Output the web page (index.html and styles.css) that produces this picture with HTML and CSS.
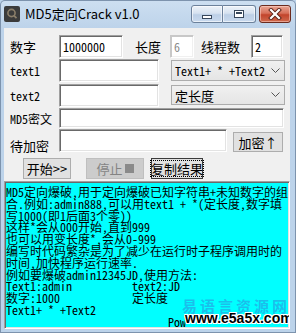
FILE: index.html
```html
<!DOCTYPE html>
<html>
<head>
<meta charset="utf-8">
<link rel="stylesheet" href="styles.css">
</head>
<body>
<div class="window">
  <div class="titlebar">
    <div class="app-icon">
      <svg width="16" height="16" viewBox="0 0 16 16">
        <rect x="0" y="0" width="16" height="16" rx="2" fill="#3b3b3b"/>
        <circle cx="7.5" cy="7" r="3.6" fill="none" stroke="#8c7f6a" stroke-width="1.6"/>
        <line x1="10" y1="9.6" x2="12.5" y2="12.2" stroke="#8c7f6a" stroke-width="1.8"/>
      </svg>
    </div>
    <div class="title">MD5定向Crack v1.0</div>
    <div class="caption-btns">
      <div class="cbtn cmin"><span class="min-glyph"></span></div>
      <div class="cbtn cmax"><span class="max-glyph"></span></div>
      <div class="cbtn cclose">
        <svg width="16" height="12" viewBox="0 0 16 12">
          <path d="M4 2 L12 10 M12 2 L4 10" stroke="#5a2218" stroke-width="4" stroke-linecap="square"/>
          <path d="M4 2 L12 10 M12 2 L4 10" stroke="#ffffff" stroke-width="2.2" stroke-linecap="square"/>
        </svg>
      </div>
    </div>
  </div>

  <div class="client">
    <div class="row r1">
      <span class="lbl lbl-first">数字</span>
      <div class="edit e-num mono">1000000</div>
      <span class="lbl lbl-len">长度</span>
      <div class="edit e-len mono disabled">6</div>
      <span class="lbl lbl-thr">线程数</span>
      <div class="edit e-thr mono">2</div>
    </div>

    <div class="row r2">
      <span class="lbl lbl-first mono">text1</span>
      <div class="edit e-text"></div>
      <div class="combo mono">Text1+ * +Text2<svg class="chev" width="9" height="6" viewBox="0 0 9 6"><path d="M0.5 0.5 L4.5 4.5 L8.5 0.5" fill="none" stroke="#555" stroke-width="1"/></svg></div>
    </div>

    <div class="row r3">
      <span class="lbl lbl-first mono">text2</span>
      <div class="edit e-text"></div>
      <div class="combo combo-cn">定长度<svg class="chev" width="9" height="6" viewBox="0 0 9 6"><path d="M0.5 0.5 L4.5 4.5 L8.5 0.5" fill="none" stroke="#555" stroke-width="1"/></svg></div>
    </div>

    <div class="row r4">
      <span class="lbl lbl-first mono">MD5密文</span>
      <div class="edit e-md5"></div>
    </div>

    <div class="row r5">
      <span class="lbl lbl-first lbl-low">待加密</span>
      <div class="edit e-plain"></div>
      <div class="btn b-enc">加密↑</div>
    </div>

    <div class="row r6">
      <div class="btn b-start">开始&gt;&gt;</div>
      <div class="btn b-stop disabled">停止<span class="sq"></span></div>
      <div class="btn b-copy"><span class="focus">复制结果</span></div>
    </div>

    <div class="memo">
<div class="memo-text">MD5定向爆破,用于定向爆破已知字符串+未知数字的组
合.例如:admin888,可以用text1 + *(定长度,数字填
写1000(即1后面3个零))
这样*会从000开始,直到999
也可以用变长度*,会从0-999
编写时代码繁杂是为了减少在运行时子程序调用时的
时间,加快程序运行速率.
例如要爆破admin12345JD,使用方法:
Text1:admin          text2:JD
数字:1000            定长度
Text1+ * +Text2
                           Pow</div>
      <div class="wm-cn">易语言资源网</div>
      <div class="wm-url">www.e5a5x.com</div>
    </div>
  </div>
</div>
</body>
</html>
```

FILE: styles.css
```css
* { box-sizing: border-box; }
html, body { margin: 0; padding: 0; }
body {
  width: 296px;
  height: 333px;
  overflow: hidden;
  background: #bcd3ea;
  font-family: "Noto Sans CJK SC", sans-serif;
  color: #000;
}
.window {
  width: 296px;
  height: 333px;
  background: linear-gradient(#cddff1 0px, #bdd3ea 28px, #bcd3ea 100%);
  box-shadow: inset 0 0 0 1px #7d93ad;
  border-radius: 5px 5px 0 0;
  display: flex;
  flex-direction: column;
}
.mono {
  font-family: "Noto Sans Mono CJK SC", "Liberation Mono", "Noto Sans CJK SC", monospace;
  font-size: 12px;
}

/* title bar */
.titlebar {
  height: 28px;
  display: flex;
  align-items: flex-start;
  padding-left: 4px;
  flex: none;
}
.app-icon { width: 16px; height: 16px; margin-top: 6px; }
.app-icon svg { display: block; }
.title {
  margin-left: 5px;
  font-size: 13px;
  line-height: 28px;
  color: #000;
  white-space: nowrap;
}
.caption-btns {
  margin-left: auto;
  margin-right: 5px;
  margin-top: 5px;
  display: flex;
}
.cbtn {
  height: 18px;
  border: 1px solid #6c819b;
  border-radius: 3px;
  display: flex;
  align-items: center;
  justify-content: center;
  background: linear-gradient(#eef3f9 0%, #d6e2f0 45%, #bccfe6 55%, #c9daee 100%);
  box-shadow: inset 0 0 0 1px rgba(255,255,255,0.6);
}
.cmin { width: 32px; border-radius: 3px 0 0 3px; }
.cmax { width: 33px; border-left: none; border-radius: 0 3px 3px 0; }
.cclose {
  width: 32px;
  margin-left: 3px;
  border-color: #6b2b1f;
  background: linear-gradient(#e9a593 0%, #d7705a 45%, #c2442c 55%, #cf6a4e 100%);
  box-shadow: inset 0 0 0 1px rgba(255,220,210,0.5);
}
.cclose svg { display: block; }
.min-glyph {
  width: 10px;
  height: 4px;
  margin-top: 6px;
  background: #fff;
  border: 1px solid #37475b;
}
.max-glyph {
  width: 10px;
  height: 8px;
  border: 1px solid #37475b;
  background: #fff;
  box-shadow: inset 0 0 0 1px #fff, inset 0 2px 0 1px #37475b;
}

/* client */
.client {
  margin-left: 4px;
  width: 286px;
  height: 301px;
  background: #f0f0f0;
  display: flex;
  flex-direction: column;
  flex: none;
}
.row {
  display: flex;
  align-items: center;
  height: 23px;
  flex: none;
}
.r1 { margin-top: 7px; }
.r2 { margin-top: 1px; }
.r3 { margin-top: 2px; }
.r4 { margin-top: 1px; height: 20px; }
.r5 { margin-top: 1px; }
.r6 { margin-top: 6px; height: 21px; }

.lbl {
  font-size: 13px;
  white-space: nowrap;
  flex: none;
}
.lbl.mono { font-size: 12px; }
.lbl-first { margin-left: 6px; width: 49px; }
.lbl-len { margin-left: 12px; width: 35px; }
.lbl-thr { margin-left: 7px; width: 50px; }
.lbl-low { align-self: flex-end; margin-bottom: -1px; line-height: 14px; }

.edit {
  height: 23px;
  background: #fff;
  border: 1px solid;
  border-color: #a0a0a0 #ffffff #ffffff #a0a0a0;
  box-shadow: inset 1px 1px 0 #696969, inset -1px -1px 0 #e3e3e3;
  padding: 0 3px;
  display: flex;
  align-items: center;
  flex: none;
  white-space: nowrap;
}
.edit.disabled { color: #8a8a8a; box-shadow: inset 1px 1px 0 #c8c8c8, inset -1px -1px 0 #f0f0f0; border-color: #c8c8c8 #fff #fff #c8c8c8; }
.e-num { width: 64px; }
.e-len { width: 24px; }
.e-thr { width: 32px; }
.e-text { width: 100px; }
.e-md5 { width: 225px; height: 20px; }
.e-plain { width: 168px; }

.combo {
  margin-left: 12px;
  width: 114px;
  height: 21px;
  border: 1px solid #acacac;
  background: linear-gradient(#f0f0f0, #e5e5e5);
  display: flex;
  align-items: center;
  padding-left: 3px;
  white-space: nowrap;
  flex: none;
  position: relative;
}
.combo-cn { font-size: 13px; height: 20px; align-self: flex-start; margin-top: 1px; }
.chev { margin-left: auto; margin-right: 4px; display: block; }

.btn {
  height: 21px;
  border: 1px solid #adadad;
  background: #e1e1e1;
  font-size: 13px;
  display: flex;
  align-items: center;
  justify-content: center;
  white-space: nowrap;
  flex: none;
}
.b-enc { margin-left: 6px; width: 50px; height: 20px; align-self: flex-end; }
.b-start { margin-left: 19px; width: 48px; }
.b-stop { margin-left: 15px; width: 58px; background: #cccccc; border-color: #bfbfbf; color: #838383; }
.sq { width: 9px; height: 9px; background: #8a8a8a; margin-left: 2px; }
.b-copy { margin-left: 7px; width: 52px; border-color: #3c3c3c; padding: 1px; }
.focus {
  flex: 1;
  align-self: stretch;
  border: 1px dotted #000;
  display: flex;
  align-items: center;
  justify-content: center;
}

/* memo */
.memo {
  margin-top: 2px;
  height: 148px;
  background: #00ffff;
  border: 1px solid;
  border-color: #a0a0a0 #ffffff #ffffff #a0a0a0;
  box-shadow: inset 1px 1px 0 #696969, inset -1px -1px 0 #e3e3e3;
  position: relative;
  overflow: hidden;
  flex: none;
}
.memo-text {
  white-space: pre;
  font-family: "Noto Sans Mono CJK SC", "Liberation Mono", "Noto Sans CJK SC", monospace;
  font-size: 12px;
  line-height: 11.8px;
  padding: 4px 0 0 1px;
  color: #000;
}
.wm-cn {
  position: absolute;
  left: 177px;
  top: 113px;
  font-size: 15px;
  font-weight: bold;
  letter-spacing: 3px;
  color: rgba(60, 110, 210, 0.45);
  white-space: nowrap;
}
.wm-url {
  position: absolute;
  left: 180px;
  top: 128px;
  font-family: "Liberation Sans", sans-serif;
  font-size: 14px;
  font-weight: bold;
  color: #000;
  white-space: nowrap;
  text-shadow: 1px 0 0 #fff, -1px 0 0 #fff, 0 1px 0 #fff, 0 -1px 0 #fff, 1px 1px 0 #fff, -1px -1px 0 #fff, 1px -1px 0 #fff, -1px 1px 0 #fff;
}
```
